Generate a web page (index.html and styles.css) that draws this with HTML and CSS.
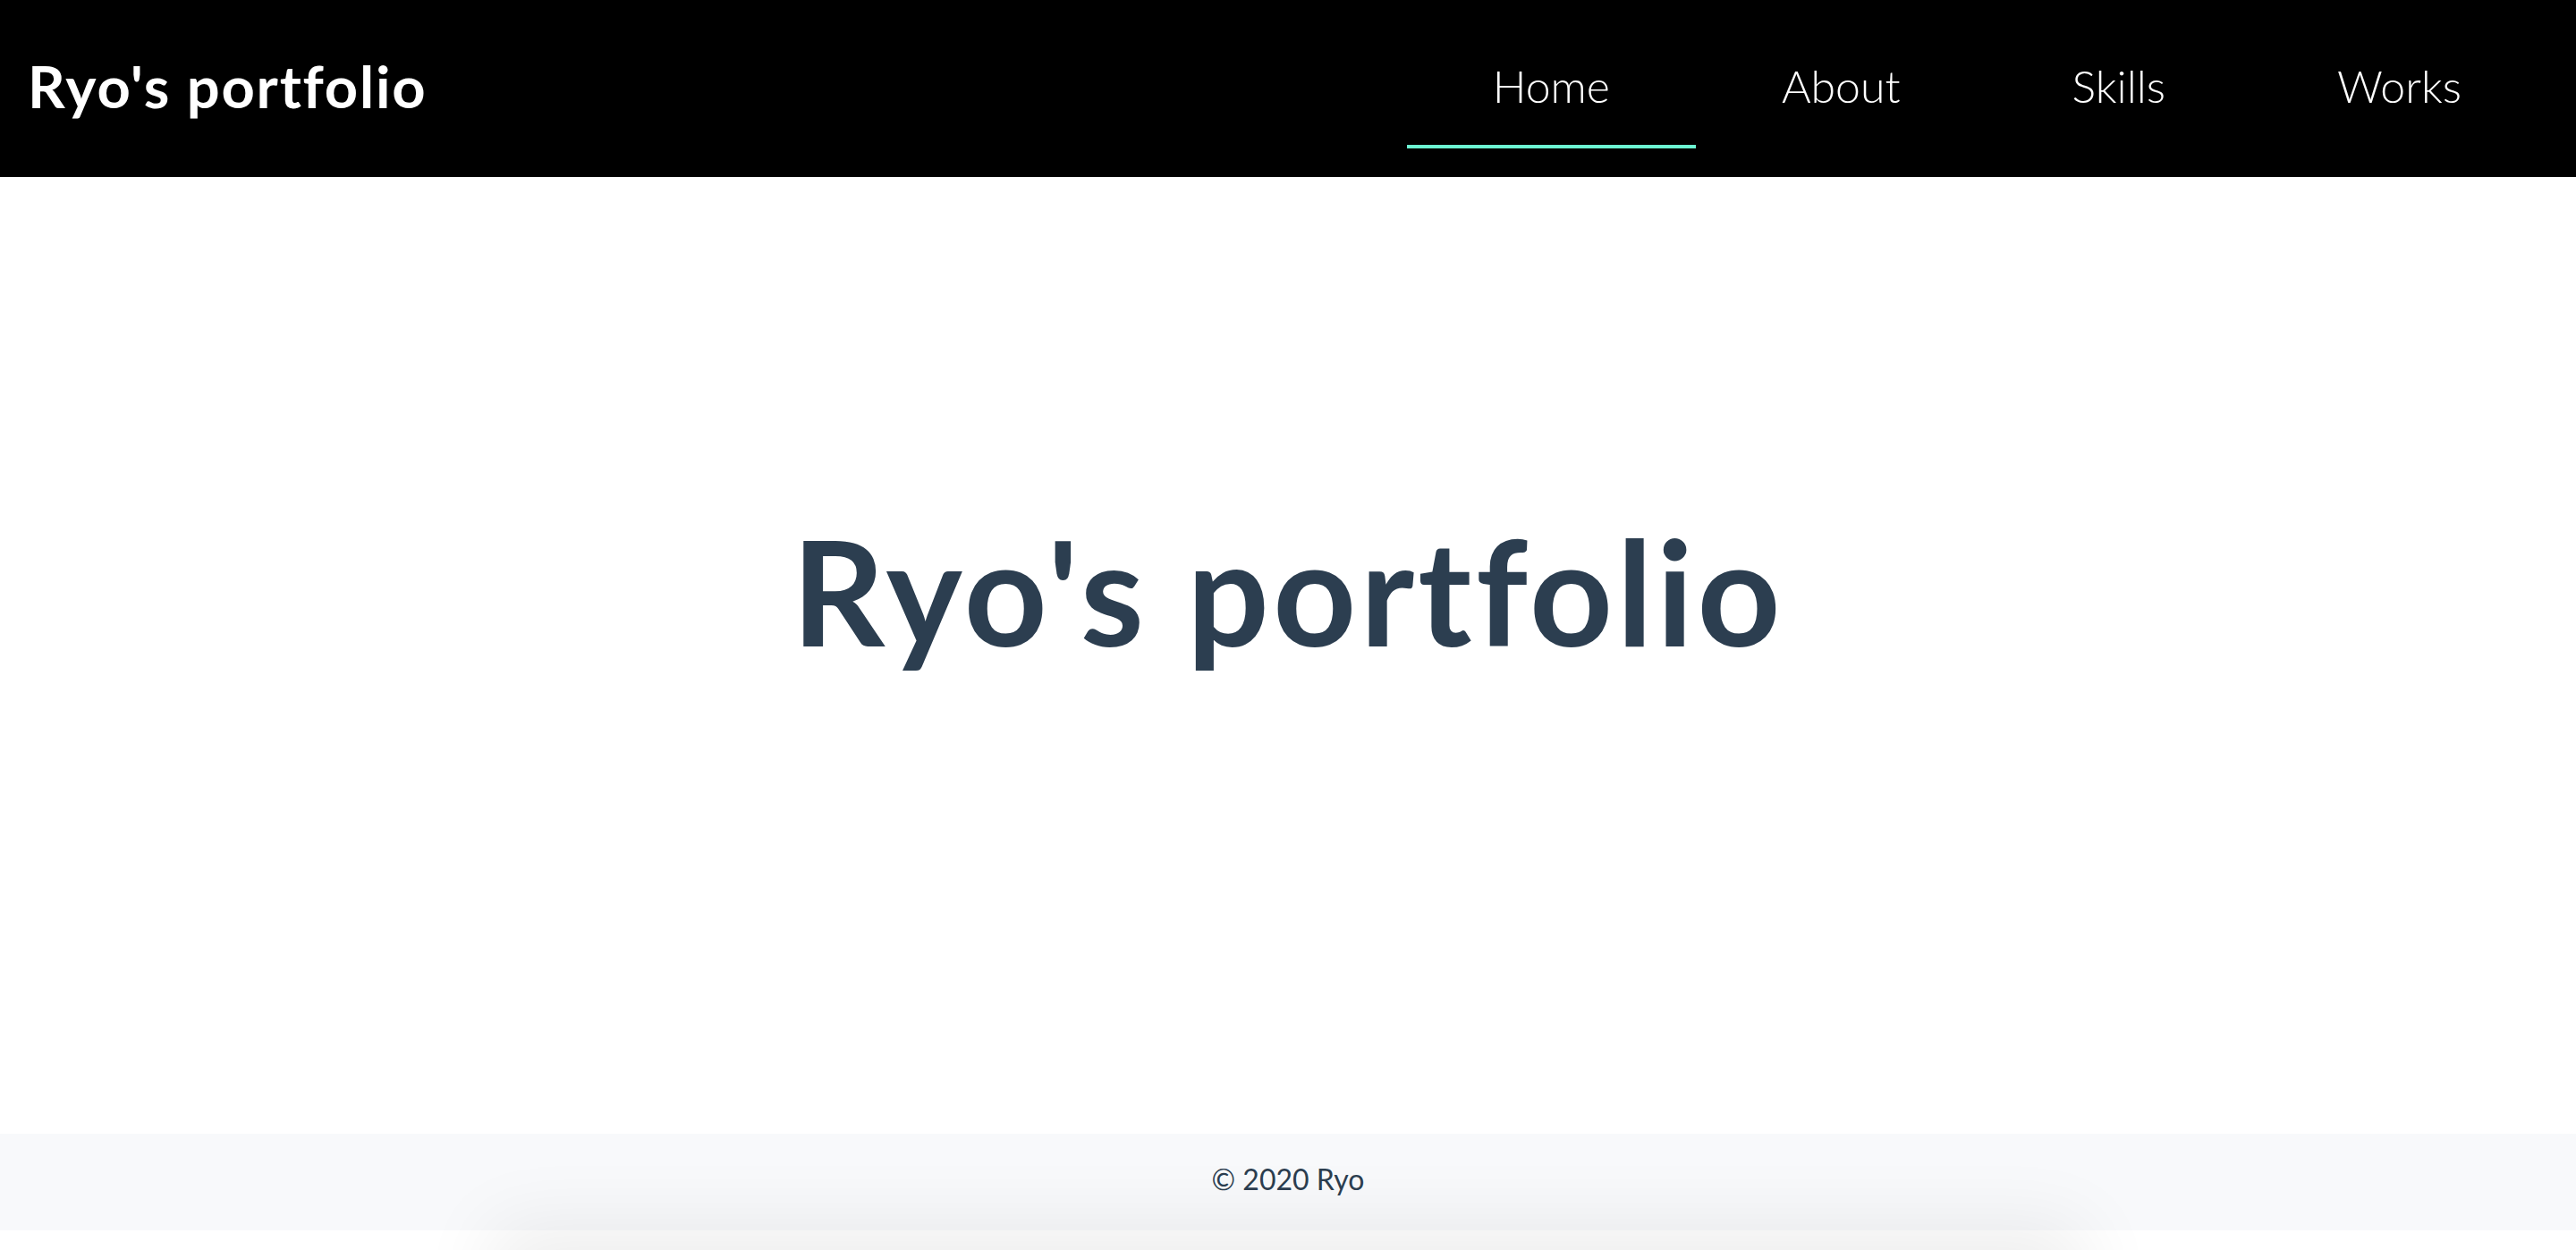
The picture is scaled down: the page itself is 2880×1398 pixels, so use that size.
FILE: index.html
```html
<!DOCTYPE html>
<html lang="en">
<head>
<meta charset="utf-8">
<title>Ryo's portfolio</title>
<link rel="stylesheet" href="styles.css">
</head>
<body>
<header class="site-header">
  <div class="logo">Ryo's portfolio</div>
  <nav class="nav">
    <a class="nav-link active" href="#">Home</a>
    <a class="nav-link" href="#">About</a>
    <a class="nav-link" href="#">Skills</a>
    <a class="nav-link" href="#">Works</a>
  </nav>
</header>
<main class="hero">
  <h1 class="hero-title">Ryo's portfolio</h1>
</main>
<footer class="site-footer">
  <p class="copy">© 2020 Ryo</p>
</footer>
<div class="below-card"></div>
</body>
</html>
```
FILE: styles.css
```css
html, body {
  margin: 0;
  padding: 0;
}
body {
  font-family: Lato, "Open Sans", sans-serif;
  color: #2c3e50;
  background: #ffffff;
  position: relative;
  height: 1398px;
  overflow: hidden;
}
.site-header {
  height: 198px;
  box-sizing: border-box;
  background: #000000;
  display: flex;
  justify-content: space-between;
  align-items: flex-start;
  padding: 0 32px 0 31px;
}
.logo {
  color: #ffffff;
  font-weight: 700;
  font-size: 65px;
  line-height: 78px;
  letter-spacing: 1.8px;
  padding-top: 57px;
}
.nav {
  display: flex;
}
.nav-link {
  display: block;
  color: #ffffff;
  text-decoration: none;
  font-weight: 300;
  font-size: 50px;
  line-height: 60px;
  letter-spacing: 0;
  padding: 66px 96px 36px;
  border-bottom: 4px solid transparent;
}
.nav-link.active {
  border-bottom-color: #6cf8d2;
}
.hero {
  display: block;
  height: 1070px;
  box-sizing: border-box;
  padding-top: 366px;
  text-align: center;
}
.hero-title {
  margin: 0;
  font-size: 162px;
  line-height: 1.2;
  font-weight: 700;
  letter-spacing: 4.3px;
  color: #2c3e50;
}
.site-footer {
  height: 108px;
  box-sizing: border-box;
  background: #f8f9fb;
  padding-top: 32px;
  text-align: center;
}
.copy {
  margin: 0;
  font-size: 32px;
  line-height: 1.2;
  color: #2c3e50;
}
.below-card {
  position: absolute;
  top: 1400px;
  left: 580px;
  width: 1720px;
  height: 300px;
  background: #efefef;
  box-shadow: 0 0 80px 30px rgba(0, 0, 0, 0.07);
}
```
